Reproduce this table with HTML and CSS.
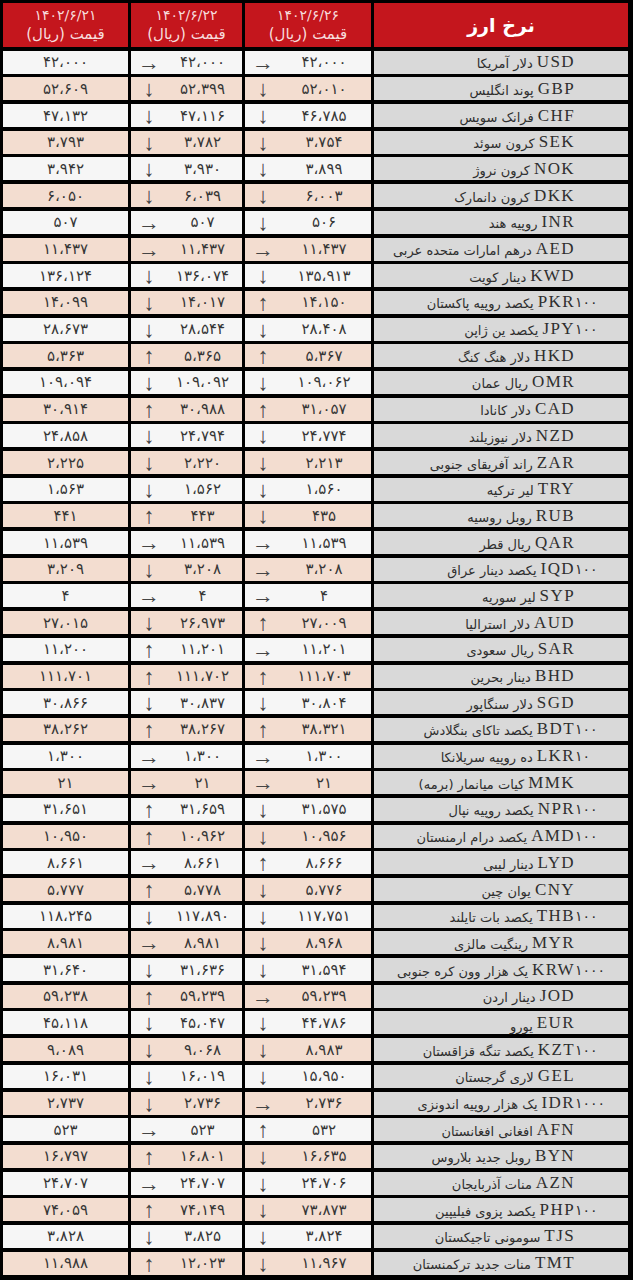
FILE: index.html
```html
<!DOCTYPE html>
<html lang="fa">
<head>
<meta charset="utf-8">
<title>نرخ ارز</title>
<link rel="stylesheet" href="styles.css">
</head>
<body>
<div class="sheet" dir="rtl">
  <div class="row head">
    <div class="hc"><span class="hd-title">نرخ ارز</span></div>
    <div class="hc"><span class="hd-date">۱۴۰۲/۶/۲۶</span><span class="hd-sub">قیمت (ریال)</span></div>
    <div class="hc"><span class="hd-date">۱۴۰۲/۶/۲۲</span><span class="hd-sub">قیمت (ریال)</span></div>
    <div class="hc"><span class="hd-date">۱۴۰۲/۶/۲۱</span><span class="hd-sub">قیمت (ریال)</span></div>
  </div>

  <div class="row w"><div class="nm"><span class="sx"></span><span class="cd">USD</span><span class="fa">دلار آمریکا</span></div><div class="c v"><span class="n">۴۲،۰۰۰</span><span class="ar">→</span></div><div class="c v"><span class="n">۴۲،۰۰۰</span><span class="ar">→</span></div><div class="c s">۴۲،۰۰۰</div></div>
  <div class="row p"><div class="nm"><span class="sx"></span><span class="cd">GBP</span><span class="fa">پوند انگلیس</span></div><div class="c v"><span class="n">۵۲،۰۱۰</span><span class="ar">↓</span></div><div class="c v"><span class="n">۵۲،۳۹۹</span><span class="ar">↓</span></div><div class="c s">۵۲،۶۰۹</div></div>
  <div class="row w"><div class="nm"><span class="sx"></span><span class="cd">CHF</span><span class="fa">فرانک سویس</span></div><div class="c v"><span class="n">۴۶،۷۸۵</span><span class="ar">↓</span></div><div class="c v"><span class="n">۴۷،۱۱۶</span><span class="ar">↓</span></div><div class="c s">۴۷،۱۳۲</div></div>
  <div class="row p"><div class="nm"><span class="sx"></span><span class="cd">SEK</span><span class="fa">کرون سوئد</span></div><div class="c v"><span class="n">۳،۷۵۴</span><span class="ar">↓</span></div><div class="c v"><span class="n">۳،۷۸۲</span><span class="ar">↓</span></div><div class="c s">۳،۷۹۳</div></div>
  <div class="row w"><div class="nm"><span class="sx"></span><span class="cd">NOK</span><span class="fa">کرون نروژ</span></div><div class="c v"><span class="n">۳،۸۹۹</span><span class="ar">↓</span></div><div class="c v"><span class="n">۳،۹۳۰</span><span class="ar">↓</span></div><div class="c s">۳،۹۴۲</div></div>
  <div class="row p"><div class="nm"><span class="sx"></span><span class="cd">DKK</span><span class="fa">کرون دانمارک</span></div><div class="c v"><span class="n">۶،۰۰۳</span><span class="ar">↓</span></div><div class="c v"><span class="n">۶،۰۳۹</span><span class="ar">↓</span></div><div class="c s">۶،۰۵۰</div></div>
  <div class="row w"><div class="nm"><span class="sx"></span><span class="cd">INR</span><span class="fa">روپیه هند</span></div><div class="c v"><span class="n">۵۰۶</span><span class="ar">↓</span></div><div class="c v"><span class="n">۵۰۷</span><span class="ar">→</span></div><div class="c s">۵۰۷</div></div>
  <div class="row p"><div class="nm"><span class="sx"></span><span class="cd">AED</span><span class="fa">درهم امارات متحده عربی</span></div><div class="c v"><span class="n">۱۱،۴۳۷</span><span class="ar">→</span></div><div class="c v"><span class="n">۱۱،۴۳۷</span><span class="ar">→</span></div><div class="c s">۱۱،۴۳۷</div></div>
  <div class="row w"><div class="nm"><span class="sx"></span><span class="cd">KWD</span><span class="fa">دینار کویت</span></div><div class="c v"><span class="n">۱۳۵،۹۱۳</span><span class="ar">↓</span></div><div class="c v"><span class="n">۱۳۶،۰۷۴</span><span class="ar">↓</span></div><div class="c s">۱۳۶،۱۲۴</div></div>
  <div class="row p"><div class="nm"><span class="sx">۱۰۰</span><span class="cd">PKR</span><span class="fa">یکصد روپیه پاکستان</span></div><div class="c v"><span class="n">۱۴،۱۵۰</span><span class="ar">↑</span></div><div class="c v"><span class="n">۱۴،۰۱۷</span><span class="ar">↓</span></div><div class="c s">۱۴،۰۹۹</div></div>
  <div class="row w"><div class="nm"><span class="sx">۱۰۰</span><span class="cd">JPY</span><span class="fa">یکصد ین ژاپن</span></div><div class="c v"><span class="n">۲۸،۴۰۸</span><span class="ar">↓</span></div><div class="c v"><span class="n">۲۸،۵۴۴</span><span class="ar">↓</span></div><div class="c s">۲۸،۶۷۳</div></div>
  <div class="row p"><div class="nm"><span class="sx"></span><span class="cd">HKD</span><span class="fa">دلار هنگ کنگ</span></div><div class="c v"><span class="n">۵،۳۶۷</span><span class="ar">↑</span></div><div class="c v"><span class="n">۵،۳۶۵</span><span class="ar">↑</span></div><div class="c s">۵،۳۶۳</div></div>
  <div class="row w"><div class="nm"><span class="sx"></span><span class="cd">OMR</span><span class="fa">ریال عمان</span></div><div class="c v"><span class="n">۱۰۹،۰۶۲</span><span class="ar">↓</span></div><div class="c v"><span class="n">۱۰۹،۰۹۲</span><span class="ar">↓</span></div><div class="c s">۱۰۹،۰۹۴</div></div>
  <div class="row p"><div class="nm"><span class="sx"></span><span class="cd">CAD</span><span class="fa">دلار کانادا</span></div><div class="c v"><span class="n">۳۱،۰۵۷</span><span class="ar">↑</span></div><div class="c v"><span class="n">۳۰،۹۸۸</span><span class="ar">↑</span></div><div class="c s">۳۰،۹۱۴</div></div>
  <div class="row w"><div class="nm"><span class="sx"></span><span class="cd">NZD</span><span class="fa">دلار نیوزیلند</span></div><div class="c v"><span class="n">۲۴،۷۷۴</span><span class="ar">↓</span></div><div class="c v"><span class="n">۲۴،۷۹۴</span><span class="ar">↓</span></div><div class="c s">۲۴،۸۵۸</div></div>
  <div class="row p"><div class="nm"><span class="sx"></span><span class="cd">ZAR</span><span class="fa">راند آفریقای جنوبی</span></div><div class="c v"><span class="n">۲،۲۱۳</span><span class="ar">↓</span></div><div class="c v"><span class="n">۲،۲۲۰</span><span class="ar">↓</span></div><div class="c s">۲،۲۲۵</div></div>
  <div class="row w"><div class="nm"><span class="sx"></span><span class="cd">TRY</span><span class="fa">لیر ترکیه</span></div><div class="c v"><span class="n">۱،۵۶۰</span><span class="ar">↓</span></div><div class="c v"><span class="n">۱،۵۶۲</span><span class="ar">↓</span></div><div class="c s">۱،۵۶۳</div></div>
  <div class="row p"><div class="nm"><span class="sx"></span><span class="cd">RUB</span><span class="fa">روبل روسیه</span></div><div class="c v"><span class="n">۴۳۵</span><span class="ar">↓</span></div><div class="c v"><span class="n">۴۴۳</span><span class="ar">↑</span></div><div class="c s">۴۴۱</div></div>
  <div class="row w"><div class="nm"><span class="sx"></span><span class="cd">QAR</span><span class="fa">ریال قطر</span></div><div class="c v"><span class="n">۱۱،۵۳۹</span><span class="ar">→</span></div><div class="c v"><span class="n">۱۱،۵۳۹</span><span class="ar">→</span></div><div class="c s">۱۱،۵۳۹</div></div>
  <div class="row p"><div class="nm"><span class="sx">۱۰۰</span><span class="cd">IQD</span><span class="fa">یکصد دینار عراق</span></div><div class="c v"><span class="n">۳،۲۰۸</span><span class="ar">→</span></div><div class="c v"><span class="n">۳،۲۰۸</span><span class="ar">↓</span></div><div class="c s">۳،۲۰۹</div></div>
  <div class="row w"><div class="nm"><span class="sx"></span><span class="cd">SYP</span><span class="fa">لیر سوریه</span></div><div class="c v"><span class="n">۴</span><span class="ar">→</span></div><div class="c v"><span class="n">۴</span><span class="ar">→</span></div><div class="c s">۴</div></div>
  <div class="row p"><div class="nm"><span class="sx"></span><span class="cd">AUD</span><span class="fa">دلار استرالیا</span></div><div class="c v"><span class="n">۲۷،۰۰۹</span><span class="ar">↑</span></div><div class="c v"><span class="n">۲۶،۹۷۳</span><span class="ar">↓</span></div><div class="c s">۲۷،۰۱۵</div></div>
  <div class="row w"><div class="nm"><span class="sx"></span><span class="cd">SAR</span><span class="fa">ریال سعودی</span></div><div class="c v"><span class="n">۱۱،۲۰۱</span><span class="ar">→</span></div><div class="c v"><span class="n">۱۱،۲۰۱</span><span class="ar">↑</span></div><div class="c s">۱۱،۲۰۰</div></div>
  <div class="row p"><div class="nm"><span class="sx"></span><span class="cd">BHD</span><span class="fa">دینار بحرین</span></div><div class="c v"><span class="n">۱۱۱،۷۰۳</span><span class="ar">↑</span></div><div class="c v"><span class="n">۱۱۱،۷۰۲</span><span class="ar">↑</span></div><div class="c s">۱۱۱،۷۰۱</div></div>
  <div class="row w"><div class="nm"><span class="sx"></span><span class="cd">SGD</span><span class="fa">دلار سنگاپور</span></div><div class="c v"><span class="n">۳۰،۸۰۴</span><span class="ar">↓</span></div><div class="c v"><span class="n">۳۰،۸۳۷</span><span class="ar">↓</span></div><div class="c s">۳۰،۸۶۶</div></div>
  <div class="row p"><div class="nm"><span class="sx">۱۰۰</span><span class="cd">BDT</span><span class="fa">یکصد تاکای بنگلادش</span></div><div class="c v"><span class="n">۳۸،۳۲۱</span><span class="ar">↑</span></div><div class="c v"><span class="n">۳۸،۲۶۷</span><span class="ar">↑</span></div><div class="c s">۳۸،۲۶۲</div></div>
  <div class="row w"><div class="nm"><span class="sx">۱۰</span><span class="cd">LKR</span><span class="fa">ده روپیه سریلانکا</span></div><div class="c v"><span class="n">۱،۳۰۰</span><span class="ar">→</span></div><div class="c v"><span class="n">۱،۳۰۰</span><span class="ar">→</span></div><div class="c s">۱،۳۰۰</div></div>
  <div class="row p"><div class="nm"><span class="sx"></span><span class="cd">MMK</span><span class="fa">کیات میانمار (برمه)</span></div><div class="c v"><span class="n">۲۱</span><span class="ar">→</span></div><div class="c v"><span class="n">۲۱</span><span class="ar">→</span></div><div class="c s">۲۱</div></div>
  <div class="row w"><div class="nm"><span class="sx">۱۰۰</span><span class="cd">NPR</span><span class="fa">یکصد روپیه نپال</span></div><div class="c v"><span class="n">۳۱،۵۷۵</span><span class="ar">↓</span></div><div class="c v"><span class="n">۳۱،۶۵۹</span><span class="ar">↑</span></div><div class="c s">۳۱،۶۵۱</div></div>
  <div class="row p"><div class="nm"><span class="sx">۱۰۰</span><span class="cd">AMD</span><span class="fa">یکصد درام ارمنستان</span></div><div class="c v"><span class="n">۱۰،۹۵۶</span><span class="ar">↓</span></div><div class="c v"><span class="n">۱۰،۹۶۲</span><span class="ar">↑</span></div><div class="c s">۱۰،۹۵۰</div></div>
  <div class="row w"><div class="nm"><span class="sx"></span><span class="cd">LYD</span><span class="fa">دینار لیبی</span></div><div class="c v"><span class="n">۸،۶۶۶</span><span class="ar">↑</span></div><div class="c v"><span class="n">۸،۶۶۱</span><span class="ar">→</span></div><div class="c s">۸،۶۶۱</div></div>
  <div class="row p"><div class="nm"><span class="sx"></span><span class="cd">CNY</span><span class="fa">یوان چین</span></div><div class="c v"><span class="n">۵،۷۷۶</span><span class="ar">↓</span></div><div class="c v"><span class="n">۵،۷۷۸</span><span class="ar">↑</span></div><div class="c s">۵،۷۷۷</div></div>
  <div class="row w"><div class="nm"><span class="sx">۱۰۰</span><span class="cd">THB</span><span class="fa">یکصد بات تایلند</span></div><div class="c v"><span class="n">۱۱۷،۷۵۱</span><span class="ar">↓</span></div><div class="c v"><span class="n">۱۱۷،۸۹۰</span><span class="ar">↓</span></div><div class="c s">۱۱۸،۲۴۵</div></div>
  <div class="row p"><div class="nm"><span class="sx"></span><span class="cd">MYR</span><span class="fa">رینگیت مالزی</span></div><div class="c v"><span class="n">۸،۹۶۸</span><span class="ar">↓</span></div><div class="c v"><span class="n">۸،۹۸۱</span><span class="ar">→</span></div><div class="c s">۸،۹۸۱</div></div>
  <div class="row w"><div class="nm"><span class="sx">۱۰۰۰</span><span class="cd">KRW</span><span class="fa">یک هزار وون کره جنوبی</span></div><div class="c v"><span class="n">۳۱،۵۹۴</span><span class="ar">↓</span></div><div class="c v"><span class="n">۳۱،۶۳۶</span><span class="ar">↓</span></div><div class="c s">۳۱،۶۴۰</div></div>
  <div class="row p"><div class="nm"><span class="sx"></span><span class="cd">JOD</span><span class="fa">دینار اردن</span></div><div class="c v"><span class="n">۵۹،۲۳۹</span><span class="ar">→</span></div><div class="c v"><span class="n">۵۹،۲۳۹</span><span class="ar">↑</span></div><div class="c s">۵۹،۲۳۸</div></div>
  <div class="row w"><div class="nm"><span class="sx"></span><span class="cd">EUR</span><span class="fa low">یورو</span></div><div class="c v"><span class="n">۴۴،۷۸۶</span><span class="ar">↓</span></div><div class="c v"><span class="n">۴۵،۰۴۷</span><span class="ar">↓</span></div><div class="c s">۴۵،۱۱۸</div></div>
  <div class="row p"><div class="nm"><span class="sx">۱۰۰</span><span class="cd">KZT</span><span class="fa">یکصد تنگه قزاقستان</span></div><div class="c v"><span class="n">۸،۹۸۳</span><span class="ar">↓</span></div><div class="c v"><span class="n">۹،۰۶۸</span><span class="ar">↓</span></div><div class="c s">۹،۰۸۹</div></div>
  <div class="row w"><div class="nm"><span class="sx"></span><span class="cd">GEL</span><span class="fa">لاری گرجستان</span></div><div class="c v"><span class="n">۱۵،۹۵۰</span><span class="ar">↓</span></div><div class="c v"><span class="n">۱۶،۰۱۹</span><span class="ar">↓</span></div><div class="c s">۱۶،۰۳۱</div></div>
  <div class="row p"><div class="nm"><span class="sx">۱۰۰۰</span><span class="cd">IDR</span><span class="fa">یک هزار روپیه اندونزی</span></div><div class="c v"><span class="n">۲،۷۳۶</span><span class="ar">→</span></div><div class="c v"><span class="n">۲،۷۳۶</span><span class="ar">↓</span></div><div class="c s">۲،۷۳۷</div></div>
  <div class="row w"><div class="nm"><span class="sx"></span><span class="cd">AFN</span><span class="fa">افغانی افغانستان</span></div><div class="c v"><span class="n">۵۳۲</span><span class="ar">↑</span></div><div class="c v"><span class="n">۵۲۳</span><span class="ar">→</span></div><div class="c s">۵۲۳</div></div>
  <div class="row p"><div class="nm"><span class="sx"></span><span class="cd">BYN</span><span class="fa">روبل جدید بلاروس</span></div><div class="c v"><span class="n">۱۶،۶۳۵</span><span class="ar">↓</span></div><div class="c v"><span class="n">۱۶،۸۰۱</span><span class="ar">↑</span></div><div class="c s">۱۶،۷۹۷</div></div>
  <div class="row w"><div class="nm"><span class="sx"></span><span class="cd">AZN</span><span class="fa">منات آذربایجان</span></div><div class="c v"><span class="n">۲۴،۷۰۶</span><span class="ar">↓</span></div><div class="c v"><span class="n">۲۴،۷۰۷</span><span class="ar">→</span></div><div class="c s">۲۴،۷۰۷</div></div>
  <div class="row p"><div class="nm"><span class="sx">۱۰۰</span><span class="cd">PHP</span><span class="fa">یکصد پزوی فیلیپین</span></div><div class="c v"><span class="n">۷۳،۸۷۳</span><span class="ar">↓</span></div><div class="c v"><span class="n">۷۴،۱۴۹</span><span class="ar">↑</span></div><div class="c s">۷۴،۰۵۹</div></div>
  <div class="row w"><div class="nm"><span class="sx"></span><span class="cd">TJS</span><span class="fa">سومونی تاجیکستان</span></div><div class="c v"><span class="n">۳،۸۲۴</span><span class="ar">↓</span></div><div class="c v"><span class="n">۳،۸۲۵</span><span class="ar">↓</span></div><div class="c s">۳،۸۲۸</div></div>
  <div class="row p"><div class="nm"><span class="sx"></span><span class="cd">TMT</span><span class="fa">منات جدید ترکمنستان</span></div><div class="c v"><span class="n">۱۱،۹۶۷</span><span class="ar">↓</span></div><div class="c v"><span class="n">۱۲،۰۲۳</span><span class="ar">↑</span></div><div class="c s">۱۱،۹۸۸</div></div>
</div>
</body>
</html>
```
FILE: styles.css
```css
html, body {
  margin: 0;
  padding: 0;
  background: #000;
}

.sheet {
  padding: 3px 5px 0 3px;
  display: flex;
  flex-direction: column;
  gap: 3.7px;
  font-family: "DejaVu Sans", sans-serif;
  color: #363636;
}

.row {
  display: grid;
  grid-template-columns: 254px 126px 111px 125px;
  column-gap: 3px;
  height: 23px;
}

.row.head {
  height: 44px;
}

.hc {
  background: #c4161d;
  color: #fff;
  display: flex;
  flex-direction: column;
  align-items: center;
  justify-content: center;
}

.hd-date {
  font-size: 14px;
  line-height: 18px;
  color: #f7dcdc;
}

.hd-sub {
  font-size: 15px;
  line-height: 20px;
  color: #f7dcdc;
}

.hd-title {
  font-size: 19px;
  font-weight: bold;
  color: #fff;
}

.c {
  display: flex;
  align-items: center;
  font-size: 15px;
  letter-spacing: -0.3px;
}

.row.w .c { background: #f6f6f6; }
.row.p .c { background: #f3ddd0; }

.c.s {
  justify-content: center;
}

.c.v .n {
  flex: 1;
  text-align: center;
  padding-right: 4px;
}

.c.v .ar {
  width: 36px;
  text-align: center;
  font-family: "Liberation Serif", serif;
  font-size: 22px;
  line-height: 23px;
  color: #444;
  letter-spacing: 0;
}

.nm {
  background: #d9d9d9;
  display: flex;
  align-items: center;
  padding-right: 5px;
  color: #2e2e2e;
}

.sx {
  width: 48px;
  flex: none;
  text-align: left;
  font-size: 14px;
}

.cd {
  font-family: "Liberation Serif", serif;
  font-size: 17px;
  letter-spacing: 1.4px;
  margin-left: 4px;
  direction: ltr;
}

.fa {
  font-size: 13px;
  padding-top: 3px;
  white-space: nowrap;
}

.fa.low {
  padding-top: 7px;
}
```
